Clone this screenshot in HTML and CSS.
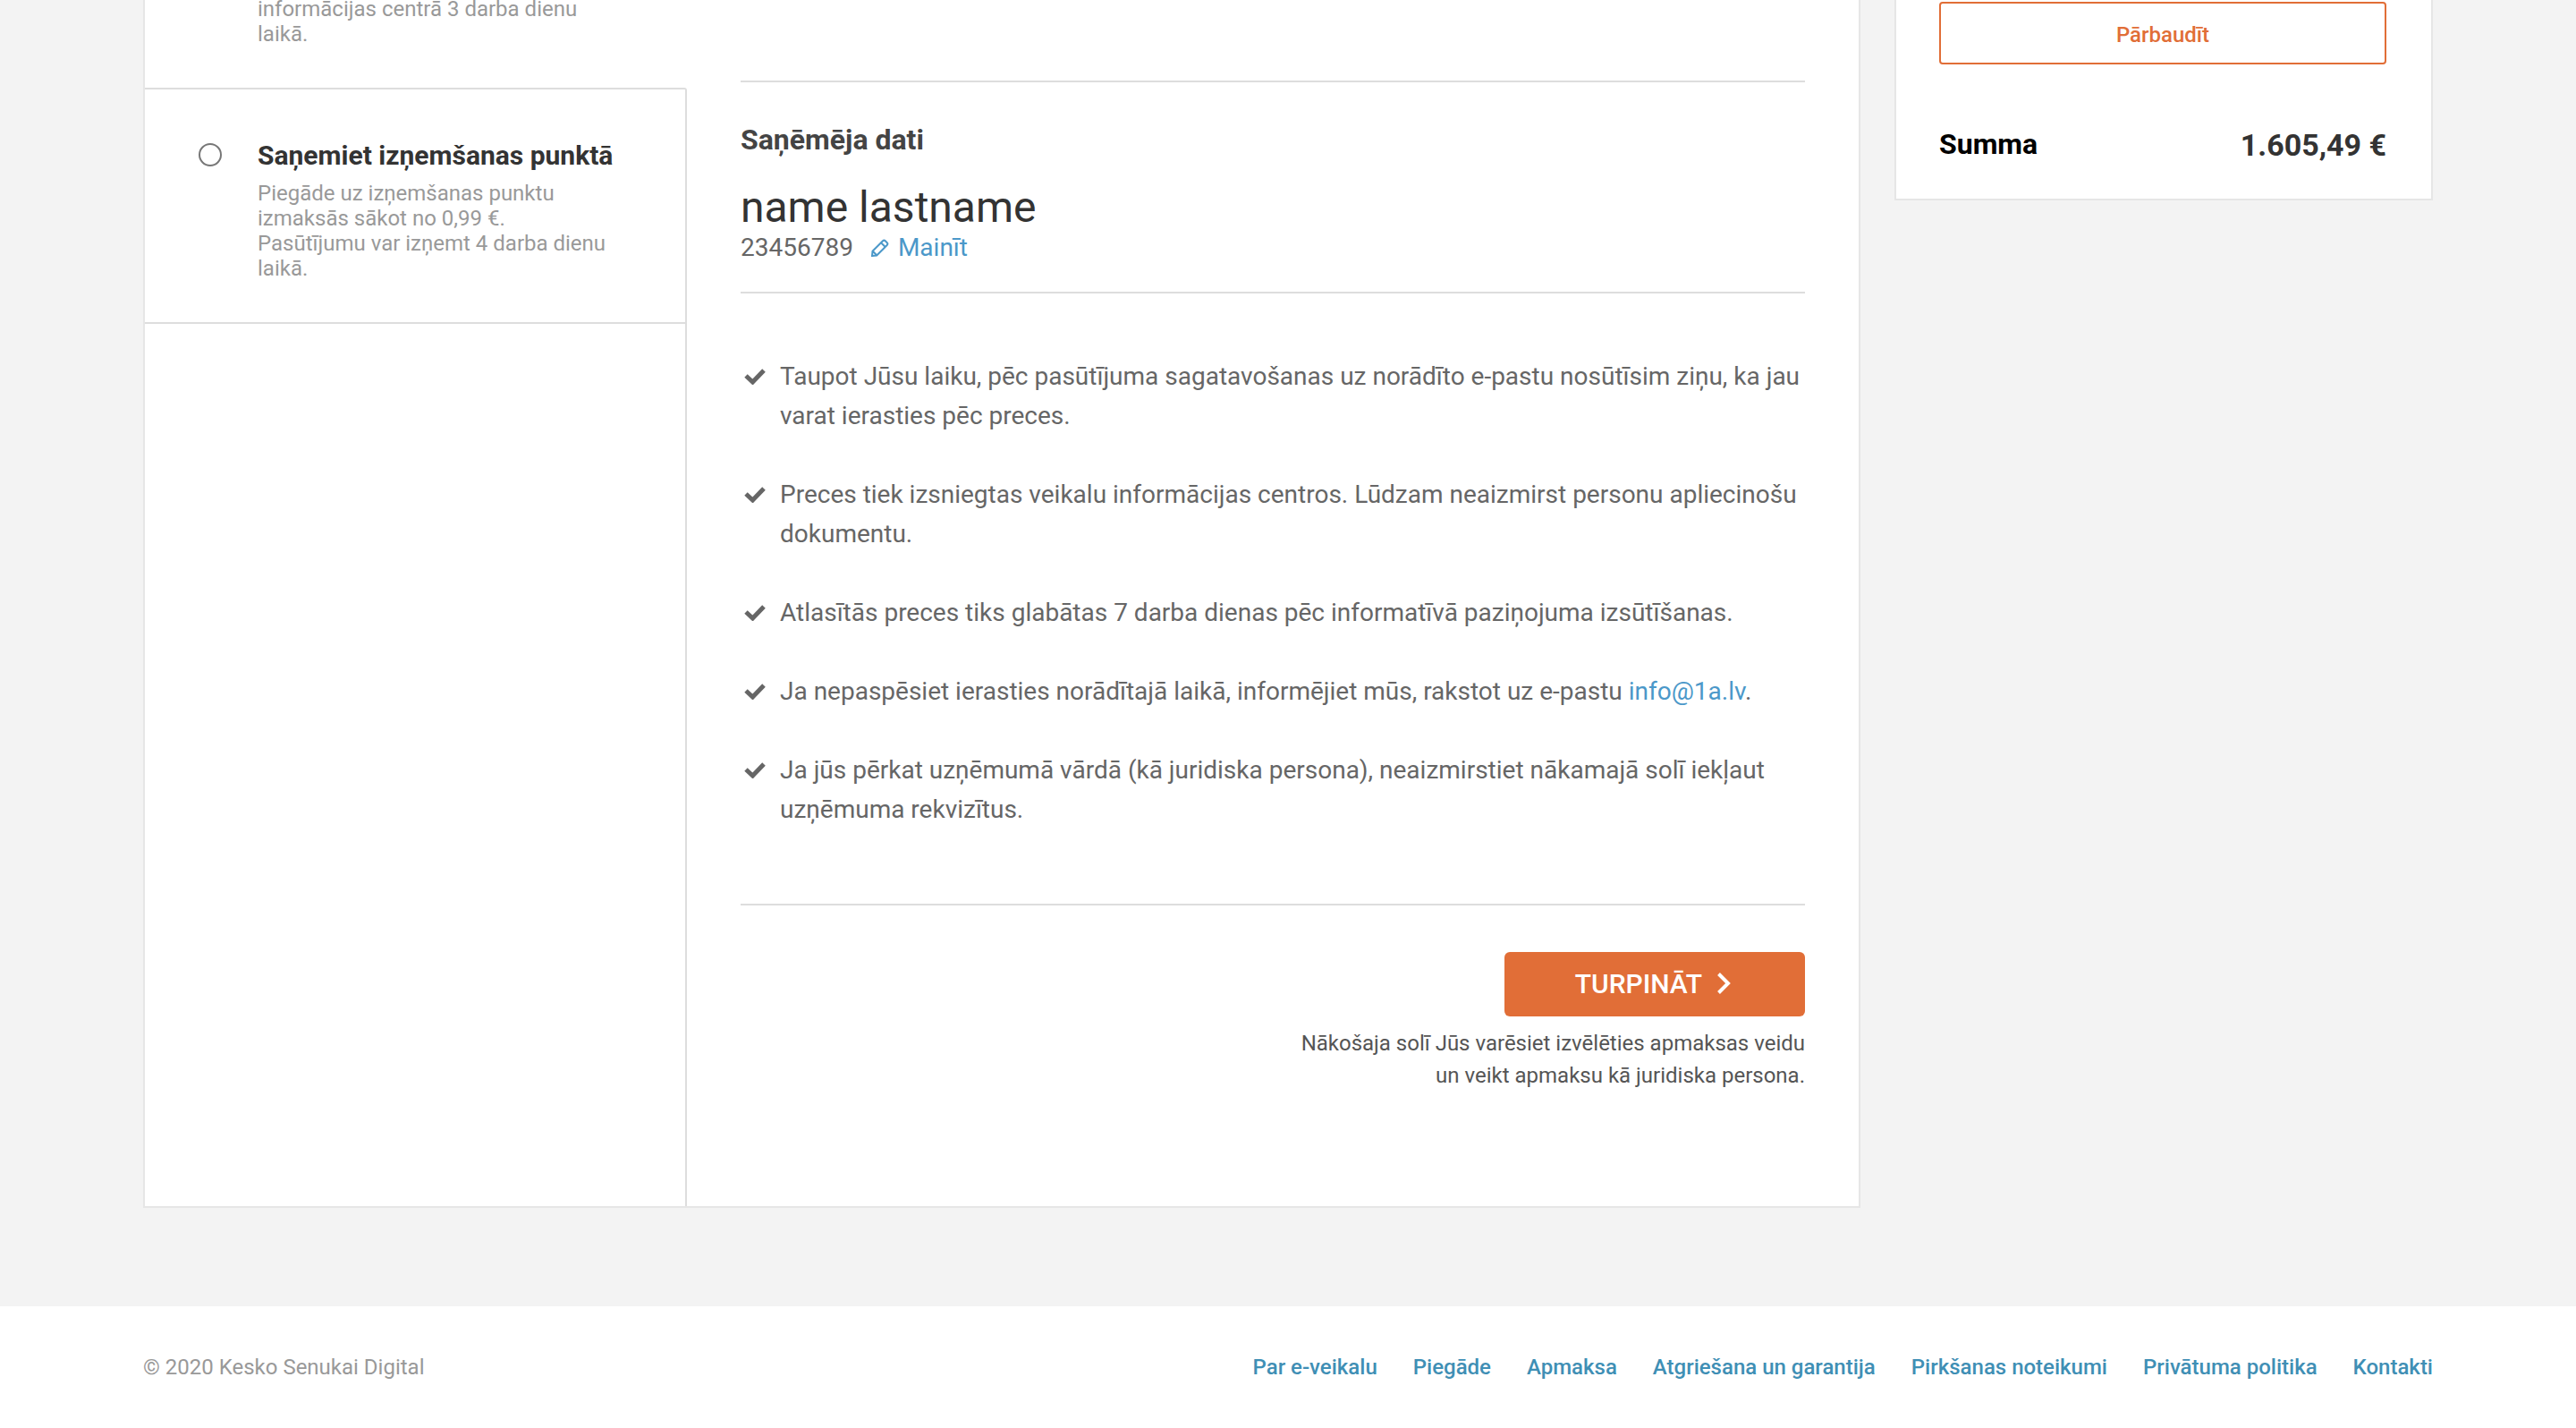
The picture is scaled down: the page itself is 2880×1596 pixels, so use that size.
FILE: index.html
```html
<!DOCTYPE html>
<html lang="lv">
<head>
<meta charset="utf-8">
<title>Piegādes veids</title>
<link rel="stylesheet" href="styles.css">
</head>
<body>
<div class="page">
  <main class="checkout">
    <div class="options">
      <div class="option option-selected">
        <p class="option-text">informācijas centrā 3 darba dienu laikā.</p>
      </div>
      <div class="option option-pickup">
        <input class="radio" type="radio" id="pickup" name="delivery">
        <div class="option-body">
          <label class="option-title" for="pickup">Saņemiet izņemšanas punktā</label>
          <p class="option-text">Piegāde uz izņemšanas punktu izmaksās sākot no 0,99 €.<br>Pasūtījumu var izņemt 4 darba dienu laikā.</p>
        </div>
      </div>
      <div class="options-rest"></div>
    </div>
    <section class="details">
      <div class="recipient">
        <h2 class="recipient-heading">Saņēmēja dati</h2>
        <p class="recipient-name">name lastname</p>
        <div class="recipient-contact">
          <span>23456789</span>
          <a class="link edit" href="#">
            <svg class="pencil" viewBox="0 0 20 20" aria-hidden="true"><path d="M1 19L1.500 13.800L13 2.300a2 2 0 0 1 2.800 0l1.900 1.900a2 2 0 0 1 0 2.800L6.200 18.500zM1.800 13.800l4.400 4.400M11 4.300l4.700 4.700"/></svg>
            <span>Mainīt</span>
          </a>
        </div>
      </div>
      <ul class="notes">
        <li class="note"><svg class="check" viewBox="0 0 24 18" aria-hidden="true"><path d="M2 8l7.500 7L22 2"/></svg><span>Taupot Jūsu laiku, pēc pasūtījuma sagatavošanas uz norādīto e-pastu nosūtīsim ziņu, ka jau varat ierasties pēc preces.</span></li>
        <li class="note"><svg class="check" viewBox="0 0 24 18" aria-hidden="true"><path d="M2 8l7.500 7L22 2"/></svg><span>Preces tiek izsniegtas veikalu informācijas centros. Lūdzam neaizmirst personu apliecinošu dokumentu.</span></li>
        <li class="note"><svg class="check" viewBox="0 0 24 18" aria-hidden="true"><path d="M2 8l7.500 7L22 2"/></svg><span>Atlasītās preces tiks glabātas 7 darba dienas pēc informatīvā paziņojuma izsūtīšanas.</span></li>
        <li class="note"><svg class="check" viewBox="0 0 24 18" aria-hidden="true"><path d="M2 8l7.500 7L22 2"/></svg><span>Ja nepaspēsiet ierasties norādītajā laikā, informējiet mūs, rakstot uz e-pastu <a class="link" href="mailto:info@1a.lv">info@1a.lv</a>.</span></li>
        <li class="note"><svg class="check" viewBox="0 0 24 18" aria-hidden="true"><path d="M2 8l7.500 7L22 2"/></svg><span>Ja jūs pērkat uzņēmumā vārdā (kā juridiska persona), neaizmirstiet nākamajā solī iekļaut uzņēmuma rekvizītus.</span></li>
      </ul>
      <div class="actions">
        <button class="continue" type="button">TURPINĀT
          <svg class="chevron" viewBox="0 0 16 26" aria-hidden="true"><path d="M2.500 2.500L13 13L2.500 23.500"/></svg>
        </button>
        <p class="actions-note">Nākošaja solī Jūs varēsiet izvēlēties apmaksas veidu<br>un veikt apmaksu kā juridiska persona.</p>
      </div>
    </section>
  </main>
  <aside class="summary">
    <button class="verify" type="button">Pārbaudīt</button>
    <div class="total">
      <span class="total-label">Summa</span>
      <span class="total-price">1.605,49 €</span>
    </div>
  </aside>
</div>
<footer class="footer">
  <span>© 2020 Kesko Senukai Digital</span>
  <nav class="footer-links">
    <a href="#">Par e-veikalu</a>
    <a href="#">Piegāde</a>
    <a href="#">Apmaksa</a>
    <a href="#">Atgriešana un garantija</a>
    <a href="#">Pirkšanas noteikumi</a>
    <a href="#">Privātuma politika</a>
    <a href="#">Kontakti</a>
  </nav>
</footer>
</body>
</html>
```
FILE: styles.css
```css
* { box-sizing: border-box; }

body {
  margin: 0;
  background: #f3f3f3;
  color: #666;
  font-family: Roboto, "Liberation Sans", sans-serif;
  font-size: 28px;
  line-height: 44px;
}

h2, p, ul { margin: 0; padding: 0; }
button { font-family: inherit; cursor: pointer; }
a { text-decoration: none; }
svg { fill: none; stroke: currentColor; flex: none; }

.page {
  display: flex;
  align-items: flex-start;
  gap: 38px;
  padding: 0 160px 110px;
}

.checkout {
  flex: 1;
  display: flex;
  background: #fff;
  border: 2px solid #e6e6e6;
  border-top: 0;
}

/* Delivery options */
.options {
  flex: 0 0 606px;
  display: flex;
  flex-direction: column;
}

.option {
  display: flex;
  padding: 46px 68px 46px 60px;
}

.option-selected {
  margin-top: -4px;
  padding: 0 68px 46px 126px;
}

.option-pickup {
  border: 2px solid #ddd;
  border-left: 0;
  border-top-right-radius: 3px;
}

.options-rest {
  flex: 1;
  border-right: 2px solid #ddd;
}

.radio {
  appearance: none;
  flex: none;
  width: 26px;
  height: 26px;
  margin: 14px 40px 0 0;
  border: 2px solid #777;
  border-radius: 50%;
}

.option-title {
  display: block;
  color: #333;
  font-size: 30px;
  font-weight: 700;
  line-height: 56px;
}

.option-text {
  color: #999;
  font-size: 24px;
  line-height: 28px;
}

/* Recipient and pickup details */
.details {
  flex: 1;
  padding: 90px 60px 128px;
}

.recipient {
  padding: 40px 0 33px;
  border-top: 2px solid #ddd;
  border-bottom: 2px solid #ddd;
}

.recipient-heading {
  color: #444;
  font-size: 32px;
  font-weight: 700;
  line-height: 48px;
}

.recipient-name {
  margin-top: 24px;
  color: #333;
  font-size: 48px;
  line-height: 56px;
}

.recipient-contact {
  display: flex;
  gap: 20px;
  margin-top: 1px;
  line-height: 32px;
}

.link { color: #4b98c9; }

.edit {
  display: flex;
  align-items: center;
  gap: 10px;
}

.pencil {
  width: 20px;
  height: 20px;
  stroke-width: 2;
}

.notes {
  padding: 71px 0 83px;
  list-style: none;
}

.note {
  display: flex;
  gap: 16px;
  padding-left: 4px;
}

.note + .note { margin-top: 44px; }

.check {
  width: 24px;
  height: 18px;
  margin-top: 13px;
  stroke-width: 5;
}

.actions {
  display: flex;
  flex-direction: column;
  align-items: flex-end;
  padding-top: 52px;
  border-top: 2px solid #ddd;
}

.continue {
  display: flex;
  align-items: center;
  justify-content: center;
  gap: 16px;
  width: 336px;
  height: 72px;
  padding: 0 4px 2px 0;
  border: 0;
  border-radius: 6px;
  background: #e16e37;
  color: #fff;
  font-size: 30px;
  font-weight: 500;
}

.chevron {
  width: 16px;
  height: 26px;
  stroke-width: 4;
}

.actions-note {
  margin-top: 12px;
  color: #555;
  font-size: 24px;
  line-height: 36px;
  text-align: right;
}

/* Order summary */
.summary {
  flex: 0 0 602px;
  padding: 2px 50px 36px 48px;
  background: #fff;
  border: 2px solid #e6e6e6;
  border-top: 0;
}

.verify {
  width: 100%;
  height: 70px;
  padding: 4px 0 0;
  border: 2px solid #e16e37;
  border-radius: 4px;
  background: #fff;
  color: #e16e37;
  font-size: 24px;
  font-weight: 500;
}

.total {
  display: flex;
  justify-content: space-between;
  margin-top: 66px;
  font-weight: 700;
}

.total-label {
  color: #000;
  font-size: 32px;
  line-height: 46px;
}

.total-price {
  color: #333;
  font-size: 34px;
  line-height: 48px;
}

/* Footer */
.footer {
  display: flex;
  justify-content: space-between;
  padding: 54px 160px;
  background: #fff;
  color: #999;
  font-size: 24px;
  line-height: 28px;
}

.footer-links {
  display: flex;
  gap: 40px;
}

.footer-links a {
  color: #3f8fb5;
  font-weight: 500;
}
```
